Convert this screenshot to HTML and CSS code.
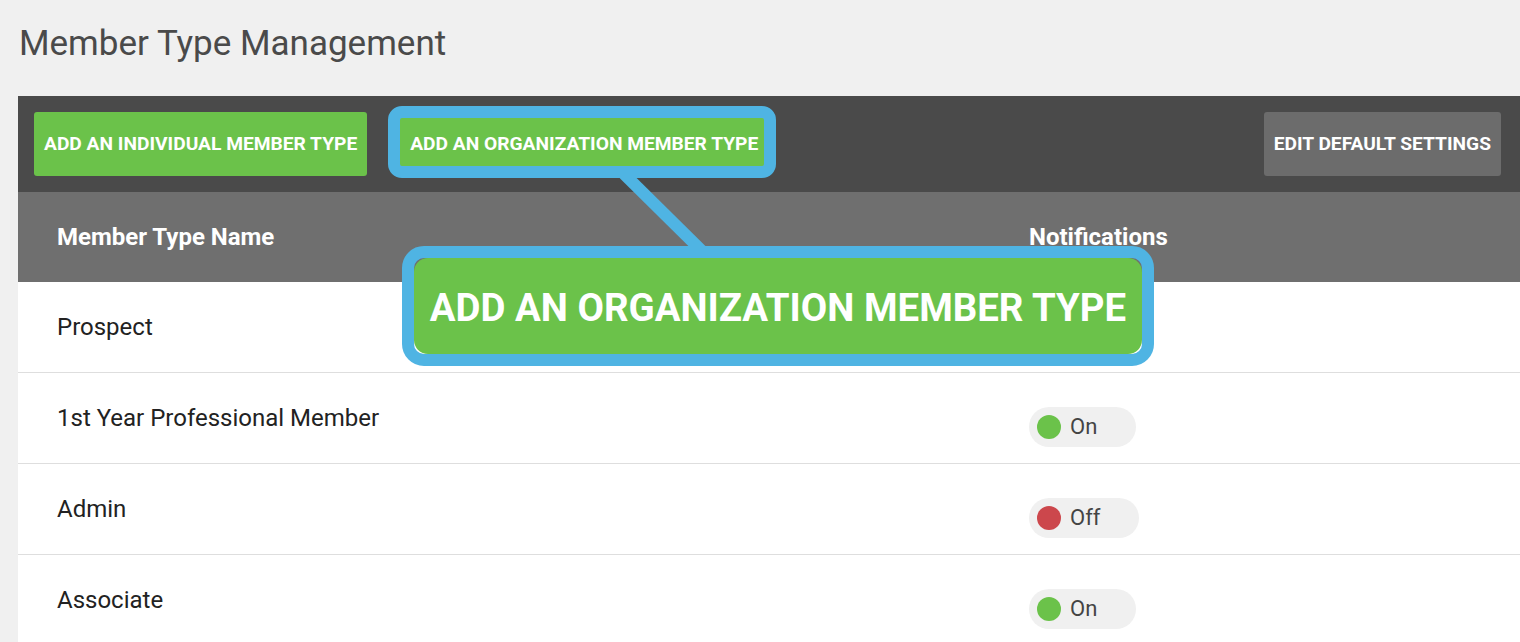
FILE: index.html
```html
<!DOCTYPE html>
<html lang="en">
<head>
<meta charset="utf-8">
<title>Member Type Management</title>
<link rel="stylesheet" href="styles.css">
</head>
<body>
<div class="page">
  <h1 class="title">Member Type Management</h1>
  <div class="panel">
    <div class="toolbar">
      <button class="btn btn-green">ADD AN INDIVIDUAL MEMBER TYPE</button>
      <button class="btn btn-green btn-org">ADD AN ORGANIZATION MEMBER TYPE</button>
      <span class="spacer"></span>
      <button class="btn btn-grey">EDIT DEFAULT SETTINGS</button>
    </div>
    <div class="table">
      <div class="row head">
        <div class="cell name">Member Type Name</div>
        <div class="cell notif">Notifications</div>
      </div>
      <div class="row">
        <div class="cell name">Prospect</div>
        <div class="cell notif"></div>
      </div>
      <div class="row">
        <div class="cell name">1st Year Professional Member</div>
        <div class="cell notif"><span class="pill"><span class="dot on"></span>On</span></div>
      </div>
      <div class="row">
        <div class="cell name">Admin</div>
        <div class="cell notif"><span class="pill"><span class="dot off"></span>Off</span></div>
      </div>
      <div class="row">
        <div class="cell name">Associate</div>
        <div class="cell notif"><span class="pill"><span class="dot on"></span>On</span></div>
      </div>
    </div>
  </div>

  <div class="hl-frame"></div>
  <svg class="hl-line" width="140" height="90" viewBox="0 0 140 90">
    <line x1="24" y1="2" x2="105" y2="82" stroke="#4fb4e3" stroke-width="12"/>
  </svg>
  <div class="callout"><div class="callout-inner">ADD AN ORGANIZATION MEMBER TYPE</div></div>
</div>
</body>
</html>
```

FILE: styles.css
```css
* { box-sizing: border-box; }
html, body { margin: 0; padding: 0; }
body {
  background: #f0f0f0;
  font-family: Roboto, "Liberation Sans", Arial, sans-serif;
  width: 1520px;
  height: 642px;
  overflow: hidden;
}
.page {
  position: relative;
  padding-left: 18px;
}
.title {
  margin: 0;
  height: 96px;
  padding: 26px 0 0 1px;
  font-size: 35px;
  line-height: 35px;
  font-weight: 400;
  color: #4a4a4a;
}
.panel {
  background: #fff;
}
.toolbar {
  height: 96px;
  background: #4a4a4a;
  display: flex;
  align-items: center;
  padding: 0 19px 0 16px;
  gap: 33px;
}
.spacer { flex: 1; }
.btn {
  height: 64px;
  border: 0;
  border-radius: 3px;
  padding: 0 10px 2px;
  font-family: Roboto, "Liberation Sans", Arial, sans-serif;
  font-weight: 700;
  font-size: 19.2px;
  color: #fff;
  cursor: pointer;
}
.btn-green { background: #6bc24a; }
.btn-grey { background: #6c6c6c; }
.row {
  display: grid;
  grid-template-columns: 1011px 1fr;
  height: 91px;
  border-bottom: 1px solid #dedede;
  align-items: center;
}
.row.head {
  height: 90px;
  background: #6f6f6f;
  border-bottom: 0;
  color: #fff;
  font-weight: 700;
  font-size: 24px;
}
.cell { font-size: 24px; color: #222; }
.row.head .cell { color: #fff; }
.cell.name { padding-left: 39px; }
.cell.notif { padding-left: 0; }
.pill {
  display: inline-flex;
  align-items: center;
  height: 40px;
  margin-top: 17px;
  padding: 0 39px 0 8px;
  border-radius: 20px;
  background: #f0f0f0;
  color: #444;
  font-size: 22px;
}
.dot {
  width: 24px;
  height: 24px;
  border-radius: 50%;
  margin-right: 9px;
}
.dot.on { background: #6bc24a; }
.dot.off { background: #cc474c; }

/* annotation overlay */
.hl-frame {
  position: absolute;
  left: 388px;
  top: 106px;
  width: 388px;
  height: 72px;
  border: 12px solid #4fb4e3;
  border-radius: 14px;
}
.hl-line {
  position: absolute;
  left: 600px;
  top: 172px;
}
.callout {
  position: absolute;
  left: 402px;
  top: 246px;
  width: 752px;
  height: 120px;
  border: 12px solid #4fb4e3;
  border-radius: 22px;
}
.callout-inner {
  height: 100%;
  background: #6bc24a;
  border-radius: 14px;
  display: flex;
  align-items: center;
  justify-content: center;
  color: #fff;
  font-weight: 700;
  font-size: 38.4px;
  padding-top: 2px;
}
```
